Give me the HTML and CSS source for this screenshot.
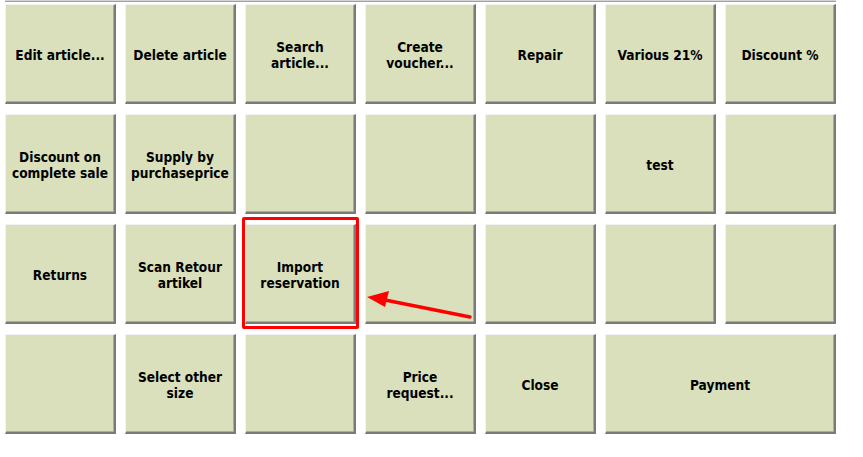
FILE: index.html
```html
<!DOCTYPE html>
<html lang="en">
<head>
<meta charset="utf-8">
<title>Sales functions</title>
<link rel="stylesheet" href="styles.css">
</head>
<body>
<div class="screen">
  <div class="panel-edge"></div>
  <div class="keypad">
    <button class="key">Edit article...</button>
    <button class="key">Delete article</button>
    <button class="key">Search<br>article...</button>
    <button class="key">Create<br>voucher...</button>
    <button class="key">Repair</button>
    <button class="key">Various 21%</button>
    <button class="key">Discount %</button>

    <button class="key">Discount on<br>complete sale</button>
    <button class="key">Supply by<br>purchaseprice</button>
    <button class="key"></button>
    <button class="key"></button>
    <button class="key"></button>
    <button class="key">test</button>
    <button class="key"></button>

    <button class="key">Returns</button>
    <button class="key">Scan Retour<br>artikel</button>
    <button class="key key-marked">Import<br>reservation</button>
    <button class="key"></button>
    <button class="key"></button>
    <button class="key"></button>
    <button class="key"></button>

    <button class="key"></button>
    <button class="key">Select other<br>size</button>
    <button class="key"></button>
    <button class="key">Price<br>request...</button>
    <button class="key">Close</button>
    <button class="key key-wide">Payment</button>
  </div>
  <svg class="pointer" width="120" height="40" viewBox="0 0 120 40">
    <line x1="105" y1="27" x2="20" y2="10" stroke="#f00" stroke-width="3.5" stroke-linecap="round"/>
    <polygon points="2,7 24,1 20,17" fill="#f00"/>
  </svg>
</div>
</body>
</html>
```

FILE: styles.css
```css
html, body {
  margin: 0;
  padding: 0;
  background: #fff;
}

.screen {
  position: relative;
  width: 863px;
  height: 457px;
  overflow: hidden;
}

.panel-edge {
  margin-left: 5px;
  width: 831px;
  height: 2px;
  border-bottom: 1px solid #a0a0a0;
  box-shadow: inset 0 -1px 0 #d4d4d4;
  box-sizing: border-box;
}

.keypad {
  display: grid;
  grid-template-columns: repeat(7, 111px);
  grid-auto-rows: 100px;
  column-gap: 9px;
  row-gap: 10px;
  margin: 2px 0 0 5px;
}

.key {
  position: relative;
  margin: 0;
  padding: 3px 2px 0;
  background: #dae0bb;
  border-style: solid;
  border-width: 1px 2px 2px 1px;
  border-color: #f2f2f2 #7a7a7a #7a7a7a #f2f2f2;
  box-shadow: inset -1px -1px 0 #a9a9a9;
  font-family: "DejaVu Sans Condensed", "DejaVu Sans", sans-serif;
  font-stretch: condensed;
  font-weight: bold;
  font-size: 13.6px;
  line-height: 16px;
  color: #000;
  text-align: center;
}

.key-wide {
  grid-column: span 2;
}

.key-marked::after {
  content: "";
  position: absolute;
  left: -4px;
  top: -8px;
  right: -5px;
  bottom: -7px;
  border: 3px solid #f00;
  border-radius: 2px;
}

.pointer {
  position: absolute;
  left: 365px;
  top: 290px;
}
```
